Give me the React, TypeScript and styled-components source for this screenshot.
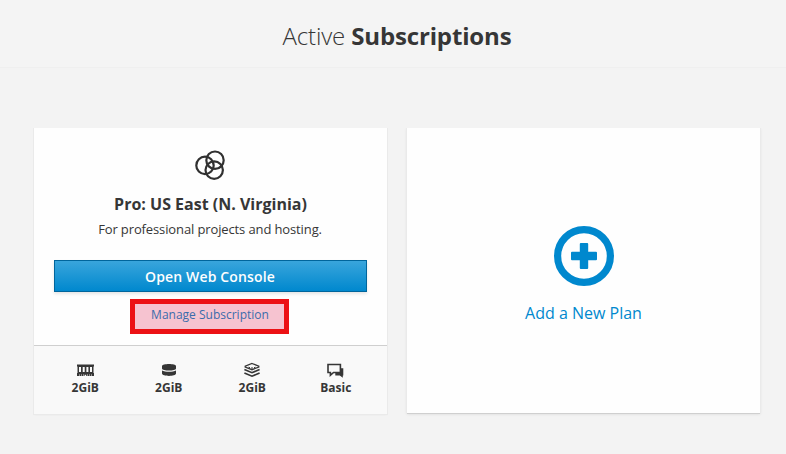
import React from "react";
import styled, { createGlobalStyle } from "styled-components";

const GlobalStyle = createGlobalStyle`
  *, *::before, *::after { box-sizing: border-box; }
  body {
    margin: 0;
    background: #f3f3f3;
    color: #363636;
    font-family: "Open Sans", "Noto Sans", sans-serif;
  }
`;

const Page = styled.main`
  height: 454px;
  overflow: hidden;
`;

const Header = styled.header`
  height: 68px;
  padding: 19px 26px 0 34px;
  border-bottom: 1px solid #efefef;
  background: #f4f4f4;
  text-align: center;
`;

const Title = styled.h1`
  margin: 0;
  font-size: 24px;
  line-height: 33px;
  font-weight: 300;
  letter-spacing: -0.15px;

  strong { font-weight: 700; }
`;

const Plans = styled.section`
  display: grid;
  grid-template-columns: 353px 353px;
  gap: 20px;
  align-items: start;
  padding: 60px 26px 0 34px;
`;

const Card = styled.article`
  display: flex;
  flex-direction: column;
  align-items: center;
  height: 286px;
  background: #fefefe;
  box-shadow: 0 0 0 1px #eaeaea, 0 1px 2px rgba(0, 0, 0, 0.05);
  clip-path: inset(0 -3px -4px -3px);
`;

const AddCard = styled(Card)`
  height: 285px;
  padding-top: 98px;
  box-shadow: 0 1px 0 #cfcfcf, 0 0 0 1px #eaeaea, 0 1px 3px rgba(0, 0, 0, 0.12);
`;

const Summary = styled.div`
  display: flex;
  flex-direction: column;
  align-items: center;
  width: 100%;
  height: 217px;
  padding: 22px 20px 0;
`;

const PlanName = styled.h2`
  margin: 10px 0 0;
  font-size: 16px;
  line-height: 24px;
  font-weight: 700;
`;

const PlanText = styled.p`
  margin: 3px 0 0;
  padding-right: 1px;
  font-size: 13px;
  line-height: 20px;
  letter-spacing: -0.12px;
`;

const ConsoleButton = styled.button`
  width: 313px;
  height: 32px;
  margin-top: 21px;
  padding: 1px 1px 0 0;
  border: 1px solid #00659c;
  background: linear-gradient(#39a5dc, #0088ce);
  box-shadow: 0 2px 3px rgba(3, 3, 3, 0.1);
  color: #fefefe;
  font: 600 14px/20px "Open Sans", sans-serif;
  letter-spacing: 0.15px;
`;

const ManageLink = styled.a`
  display: block;
  width: 159px;
  height: 35px;
  margin: 7px 2px 0 0;
  padding-left: 1px;
  border: 5px solid #ec1115;
  background: #f6c3d0;
  color: #3b6cab;
  font-size: 12px;
  line-height: 21px;
  text-align: center;
`;

const Resources = styled.footer`
  display: grid;
  grid-template-columns: repeat(4, 83.5px);
  justify-content: center;
  width: 100%;
  flex: 1;
  padding: 16px 0 0;
  border-top: 1px solid #cfcfcf;
  background: #f9f9f9;
`;

const Resource = styled.div`
  display: flex;
  flex-direction: column;
  align-items: center;
  font-size: 12px;
  line-height: 18px;
  font-weight: 700;

  svg { display: block; margin-bottom: 1px; }
`;

const AddLabel = styled.a`
  margin-top: 15px;
  color: #0088ce;
  font-size: 16px;
  line-height: 24px;
`;

const PlanIcon = () => (
  <svg width="32" height="32" viewBox="0 0 32 32" fill="none" stroke="#303030" strokeWidth="2.2">
    <circle cx="10" cy="15.4" r="8.7" />
    <circle cx="20" cy="10.2" r="8.7" />
    <circle cx="19.2" cy="20.1" r="8.7" />
  </svg>
);

const MemoryIcon = () => (
  <svg width="17" height="16" viewBox="0 0 17 16" fill="#363636">
    <path fillRule="evenodd" d="M0 2.6h17v1.9h-.5V11h.5v3H9.2v-1.3H7.6V14H0v-3h.5V4.5H0zM2 5v5h2V5zm3.7 0v5h2V5zm3.7 0v5h2V5zm3.6 0v5h2V5z" />
    <path d="M2.5 12.2v1.8M4.5 12.2v1.8M6.5 12.2v1.8M10.5 12.2v1.8M12.5 12.2v1.8M14.5 12.2v1.8" stroke="#f9f9f9" strokeWidth=".5" />
  </svg>
);

const StorageIcon = () => (
  <svg width="16" height="16" viewBox="0 0 16 16" fill="#363636">
    <path d="M1 4C1 1.2 15 1.2 15 4v2.4C15 9.1 1 9.1 1 6.4z" />
    <path d="M1 8.5c3 1.8 11 1.8 14 0v3.1c0 3.1-14 3.1-14 0z" />
  </svg>
);

const LayersIcon = () => (
  <svg width="18" height="16" viewBox="0 0 18 16" fill="none" stroke="#363636">
    <path d="M9 1.5l6.8 2.6v.9L9 7.7 2.2 5v-.9z" strokeWidth="1.3" />
    <path d="M5.5 5.2l1.5.5M8 6h2M11 5.7l1.5-.5" strokeWidth="1" />
    <path d="M1.4 7.5L9 10.7l7.6-3.2M1.4 11L9 14.2l7.6-3.2" strokeWidth="1.7" />
  </svg>
);

const SupportIcon = () => (
  <svg width="18" height="16" viewBox="0 0 18 16">
    <path d="M13.3 6.3H16.3v7.1h-.5v2.4l-3-2.4H8.3V11h5z" fill="#363636" />
    <path d="M1 2.5h12.4v8H6.6L3.4 13.2v-2.7H1z" fill="#f9f9f9" stroke="#363636" strokeWidth="1.6" />
  </svg>
);

const AddIcon = () => (
  <svg width="60" height="60" viewBox="0 0 60 60" fill="none" stroke="#0088ce">
    <circle cx="30" cy="30" r="26.4" strokeWidth="7.2" />
    <path d="M26.8 17h6.4q1 0 1 1v7.8H42q1 0 1 1v6.4q0 1-1 1h-7.8V42q0 1-1 1h-6.4q-1 0-1-1v-7.8H18q-1 0-1-1v-6.4q0-1 1-1h7.8V18q0-1 1-1z" fill="#0088ce" stroke="none" />
  </svg>
);

const resources = [
  { Icon: MemoryIcon, label: "2GiB" },
  { Icon: StorageIcon, label: "2GiB" },
  { Icon: LayersIcon, label: "2GiB" },
  { Icon: SupportIcon, label: "Basic" },
];

export default function App() {
  return (
    <>
      <GlobalStyle />
      <Page>
        <Header>
          <Title>Active <strong>Subscriptions</strong></Title>
        </Header>
        <Plans>
          <Card>
            <Summary>
              <PlanIcon />
              <PlanName>Pro: US East (N. Virginia)</PlanName>
              <PlanText>For professional projects and hosting.</PlanText>
              <ConsoleButton>Open Web Console</ConsoleButton>
              <ManageLink>Manage Subscription</ManageLink>
            </Summary>
            <Resources>
              {resources.map(({ Icon, label }, index) => (
                <Resource key={index}>
                  <Icon />
                  {label}
                </Resource>
              ))}
            </Resources>
          </Card>
          <AddCard>
            <AddIcon />
            <AddLabel>Add a New Plan</AddLabel>
          </AddCard>
        </Plans>
      </Page>
    </>
  );
}
